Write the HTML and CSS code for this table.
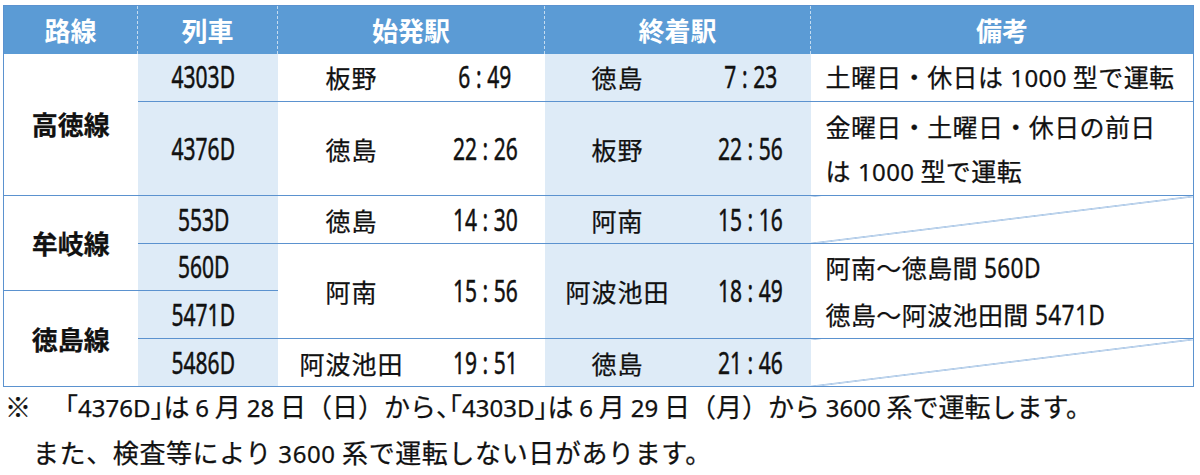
FILE: index.html
```html
<!DOCTYPE html>
<html lang="ja">
<head>
<meta charset="utf-8">
<link rel="stylesheet" href="styles.css">
</head>
<body>
<div class="page">
<table class="tt">
<colgroup>
<col class="c-line"><col class="c-train"><col class="c-dst"><col class="c-dtm"><col class="c-ast"><col class="c-atm"><col class="c-rem">
</colgroup>
<thead>
<tr class="hrow">
<th>路線</th><th>列車</th><th colspan="2">始発駅</th><th colspan="2">終着駅</th><th>備考</th>
</tr>
</thead>
<tbody>
<tr class="r1">
<td class="line" rowspan="2">高徳線</td>
<td class="train"><span class="sq">4303D</span></td>
<td class="st">板野</td><td class="tm"><span class="sq">6<span class="cl">:</span>49</span></td>
<td class="st blue">徳島</td><td class="tm blue"><span class="sq">7<span class="cl">:</span>23</span></td>
<td class="rem">土曜日・休日は<span class="pnum">1000</span>型で運転</td>
</tr>
<tr class="r2">
<td class="train"><span class="sq">4376D</span></td>
<td class="st">徳島</td><td class="tm"><span class="sq">22<span class="cl">:</span>26</span></td>
<td class="st blue">板野</td><td class="tm blue"><span class="sq">22<span class="cl">:</span>56</span></td>
<td class="rem two">金曜日・土曜日・休日の前日<br>は<span class="pnum">1000</span>型で運転</td>
</tr>
<tr class="r3">
<td class="line" rowspan="2">牟岐線</td>
<td class="train"><span class="sq">553D</span></td>
<td class="st">徳島</td><td class="tm"><span class="sq">14<span class="cl">:</span>30</span></td>
<td class="st blue">阿南</td><td class="tm blue"><span class="sq">15<span class="cl">:</span>16</span></td>
<td class="rem diag"></td>
</tr>
<tr class="r4">
<td class="train"><span class="sq">560D</span></td>
<td class="st" rowspan="2">阿南</td><td class="tm" rowspan="2"><span class="sq">15<span class="cl">:</span>56</span></td>
<td class="st blue" rowspan="2">阿波池田</td><td class="tm blue" rowspan="2"><span class="sq">18<span class="cl">:</span>49</span></td>
<td class="rem two3" rowspan="2">阿南～徳島間 <span class="sqi">560D</span><br>徳島～阿波池田間 <span class="sqi">5471D</span></td>
</tr>
<tr class="r5">
<td class="line" rowspan="2">徳島線</td>
<td class="train"><span class="sq">5471D</span></td>
</tr>
<tr class="r6">
<td class="train"><span class="sq">5486D</span></td>
<td class="st">阿波池田</td><td class="tm"><span class="sq">19<span class="cl">:</span>51</span></td>
<td class="st blue">徳島</td><td class="tm blue"><span class="sq">21<span class="cl">:</span>46</span></td>
<td class="rem diag"></td>
</tr>
</tbody>
</table>
<div class="note">
<p class="n1"><span class="mark">※</span>「<span class="num">4376D</span><span class="cb">」</span>は <span class="num">6</span> 月 <span class="num">28</span> 日（日）から<span class="cb">、</span>「<span class="num">4303D</span><span class="cb">」</span>は <span class="num">6</span> 月 <span class="num">29</span> 日（月）から <span class="num">3600</span> 系で運転します。</p>
<p class="n2">また、検査等により <span class="num">3600</span> 系で運転しない日があります。</p>
</div>
</div>
</body>
</html>
```
FILE: styles.css
```css
html, body {
  margin: 0;
  padding: 0;
  background: #ffffff;
}
body {
  font-family: "Noto Sans CJK JP", "Noto Sans", sans-serif;
  color: #111111;
}
.page {
  padding: 5px 0 0 3px;
}
.tt {
  width: 1190px;
  table-layout: fixed;
  border-collapse: collapse;
  border: 1px solid #5b92cf;
}
.c-line { width: 134px; }
.c-train { width: 140px; }
.c-dst { width: 148px; }
.c-dtm { width: 119px; }
.c-ast { width: 146px; }
.c-atm { width: 120px; }
.c-rem { width: 383px; }

.hrow { height: 48px; }
.hrow th {
  background: #5b9bd5;
  color: #ffffff;
  font-weight: 700;
  font-size: 26px;
  padding: 0;
  text-align: center;
  vertical-align: middle;
  border: none;
  border-left: 1px dashed rgba(255, 255, 255, 0.65);
}
.hrow th:first-child { border-left: none; }

.r1 { height: 48px; }
.r2 { height: 94px; }
.r3 { height: 48px; }
.r4 { height: 47px; }
.r5 { height: 48px; }
.r6 { height: 48px; }

td {
  padding: 0;
  border: none;
  border-bottom: 1px solid #5b92cf;
  vertical-align: middle;
  font-size: 25px;
  line-height: 30px;
  white-space: nowrap;
  -webkit-text-stroke: 0.25px #111111;
}
.line {
  text-align: center;
  font-weight: 700;
  font-size: 26px;
}
.train {
  background: #deebf7;
  text-align: center;
  padding-right: 8px;
}
.st {
  text-align: center;
  letter-spacing: 1px;
}
.tm {
  text-align: center;
}
.blue { background: #deebf7; }

.sq, .sqi {
  display: inline-block;
  font-family: "Noto Sans", "Liberation Sans", sans-serif;
  font-size: 30px;
  transform: scaleX(0.7);
  -webkit-text-stroke: 0.5px #111111;
}
.sqi {
  font-size: 27px;
  transform: scaleX(0.84);
  transform-origin: left center;
  -webkit-text-stroke: 0.3px #111111;
}
.cl {
  display: inline-block;
  width: 24px;
  text-align: center;
}
.pnum {
  font-family: "Noto Sans", "Liberation Sans", sans-serif;
  font-size: 24px;
  margin: 0 6px 0 7px;
}
.rem {
  padding-left: 15px;
  letter-spacing: 0.4px;
}
.rem.two { line-height: 44px; }
.rem.two3 { line-height: 47px; }
.diag {
  background: linear-gradient(to bottom right, transparent calc(50% - 0.8px), #5b92cf 50%, transparent calc(50% + 0.8px));
}

.note {
  font-size: 26px;
  line-height: 44px;
  margin-top: -3px;
  -webkit-text-stroke: 0.25px #111111;
}
.note p { margin: 0; white-space: nowrap; }
.note .num {
  font-family: "Noto Sans", "Liberation Sans", sans-serif;
  font-size: 24px;
}
.cb { font-feature-settings: "halt"; }
.mark {
  display: inline-block;
  width: 47px;
  padding-left: 2px;
}
.n2 {
  padding-left: 30px;
  letter-spacing: 0.6px;
}
```
